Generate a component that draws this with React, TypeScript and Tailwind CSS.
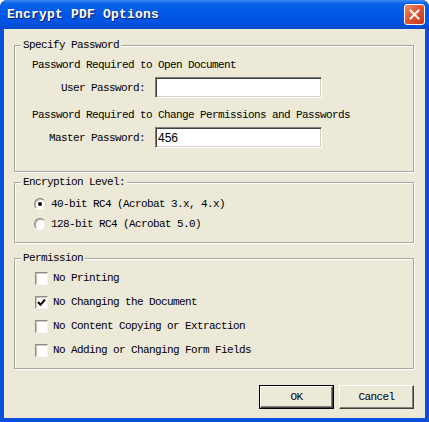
import React from "react";

const mono = { fontFamily: '"Liberation Mono", "DejaVu Sans Mono", monospace' };

function Group({ label, children, className = "" }: { label: string; children: React.ReactNode; className?: string }) {
  return (
    <fieldset
      className={"border border-[#aca899] shadow-[1px_1px_0_#ffffff,inset_1px_1px_0_#ffffff] " + className}
    >
      <legend className="ml-[6px] px-[2px] bg-[#ece9d8] h-[12px] leading-[12px] text-[11px] tracking-[-0.6px]">
        {label}
      </legend>
      {children}
    </fieldset>
  );
}

function TextInput({ value }: { value: string }) {
  return (
    <div
      className="w-[167px] h-[21px] bg-white border border-t-[#808080] border-l-[#808080] border-b-white border-r-white shadow-[inset_1px_1px_0_#404040,inset_-1px_-1px_0_#d4d0c8] flex items-center pl-[2px] text-[12px] tracking-normal text-black"
      style={{ fontFamily: '"Liberation Sans", Arial, sans-serif' }}
    >
      {value}
    </div>
  );
}

function Radio({ checked, label }: { checked?: boolean; label: string }) {
  return (
    <div className="flex items-center h-[20px]">
      <div className="ml-[19px] w-[12px] h-[12px] rounded-full bg-white border border-t-[#808080] border-l-[#808080] border-b-white border-r-[#e0ddd0] shadow-[inset_1px_1px_0_#b8b8b0] flex items-center justify-center">
        {checked && <div className="w-[4px] h-[4px] rounded-full bg-black" />}
      </div>
      <span className="ml-[5px]">{label}</span>
    </div>
  );
}

function Check({ checked, label }: { checked?: boolean; label: string }) {
  return (
    <div className="flex items-center h-[24px]">
      <div className="ml-[20px] w-[13px] h-[13px] bg-white border border-t-[#8c8c84] border-l-[#8c8c84] border-b-[#f4f3ee] border-r-[#f4f3ee] shadow-[inset_1px_1px_0_#c8c6bc] flex items-center justify-center">
        {checked && (
          <svg width="9" height="9" viewBox="0 0 9 9">
            <path d="M1 4 L3.5 6.8 L8 1.5" stroke="#000" strokeWidth="2" fill="none" />
          </svg>
        )}
      </div>
      <span className="ml-[5px]">{label}</span>
    </div>
  );
}

function Button({ label, isDefault }: { label: string; isDefault?: boolean }) {
  return (
    <div className={"w-[75px] h-[24px] " + (isDefault ? "border border-black" : "")}>
      <div
        className={
          "w-full h-full flex items-center justify-center bg-[#ece9d8] border border-t-white border-l-white border-b-[#404040] border-r-[#404040] shadow-[inset_-1px_-1px_0_#808080] text-[11px] tracking-[-0.6px]"
        }
      >
        {label}
      </div>
    </div>
  );
}

export default function App() {
  return (
    <div
      className="w-[429px] h-[422px] flex flex-col bg-[#0a4fd9] rounded-t-[7px] overflow-hidden text-black"
      style={mono}
    >
      <div className="h-[29px] flex items-center justify-between pl-[7px] pr-[4px] bg-[linear-gradient(to_bottom,#3f8cf3_0%,#0a62ea_12%,#0058e6_45%,#0053df_80%,#0a49c9_100%)]">
        <span className="text-white text-[13px] font-bold tracking-[0.2px] [text-shadow:1px_1px_0_#0a1e6e]">
          Encrypt PDF Options
        </span>
        <div className="w-[21px] h-[21px] rounded-[3px] border border-white bg-[linear-gradient(135deg,#f08b6a_0%,#e0512e_50%,#c63a17_100%)] flex items-center justify-center">
          <svg width="11" height="11" viewBox="0 0 11 11">
            <path d="M1.5 1.5 L9.5 9.5 M9.5 1.5 L1.5 9.5" stroke="#fff" strokeWidth="2" strokeLinecap="square" />
          </svg>
        </div>
      </div>
      <div className="flex-1 mx-[4px] mb-[4px] bg-[#ece9d8] pl-[10px] pr-[11px] pt-[10px] text-[11px] tracking-[-0.6px] leading-[12px] flex flex-col">
        <Group label="Specify Password" className="pb-[23px]">
          <div className="pl-[17px] pt-[8px]">
            <div className="h-[12px]">Password Required to Open Document</div>
            <div className="grid grid-cols-[113px_167px] gap-x-[10px] items-center mt-[6px]">
              <div className="text-right">User Password:</div>
              <TextInput value="" />
            </div>
            <div className="h-[12px] mt-[11px]">Password Required to Change Permissions and Passwords</div>
            <div className="grid grid-cols-[113px_167px] gap-x-[10px] items-center mt-[6px]">
              <div className="text-right">Master Password:</div>
              <TextInput value="456" />
            </div>
          </div>
        </Group>
        <Group label="Encryption Level:" className="mt-[4px] pt-[6px] pb-[8px]">
          <Radio checked label="40-bit RC4 (Acrobat 3.x, 4.x)" />
          <Radio label="128-bit RC4 (Acrobat 5.0)" />
        </Group>
        <Group label="Permission" className="mt-[9px] pt-[2px] pb-[6px]">
          <Check label="No Printing" />
          <Check checked label="No Changing the Document" />
          <Check label="No Content Copying or Extraction" />
          <Check label="No Adding or Changing Form Fields" />
        </Group>
        <div className="flex justify-end gap-[5px] mt-[16px]">
          <Button label="OK" isDefault />
          <Button label="Cancel" />
        </div>
      </div>
    </div>
  );
}
